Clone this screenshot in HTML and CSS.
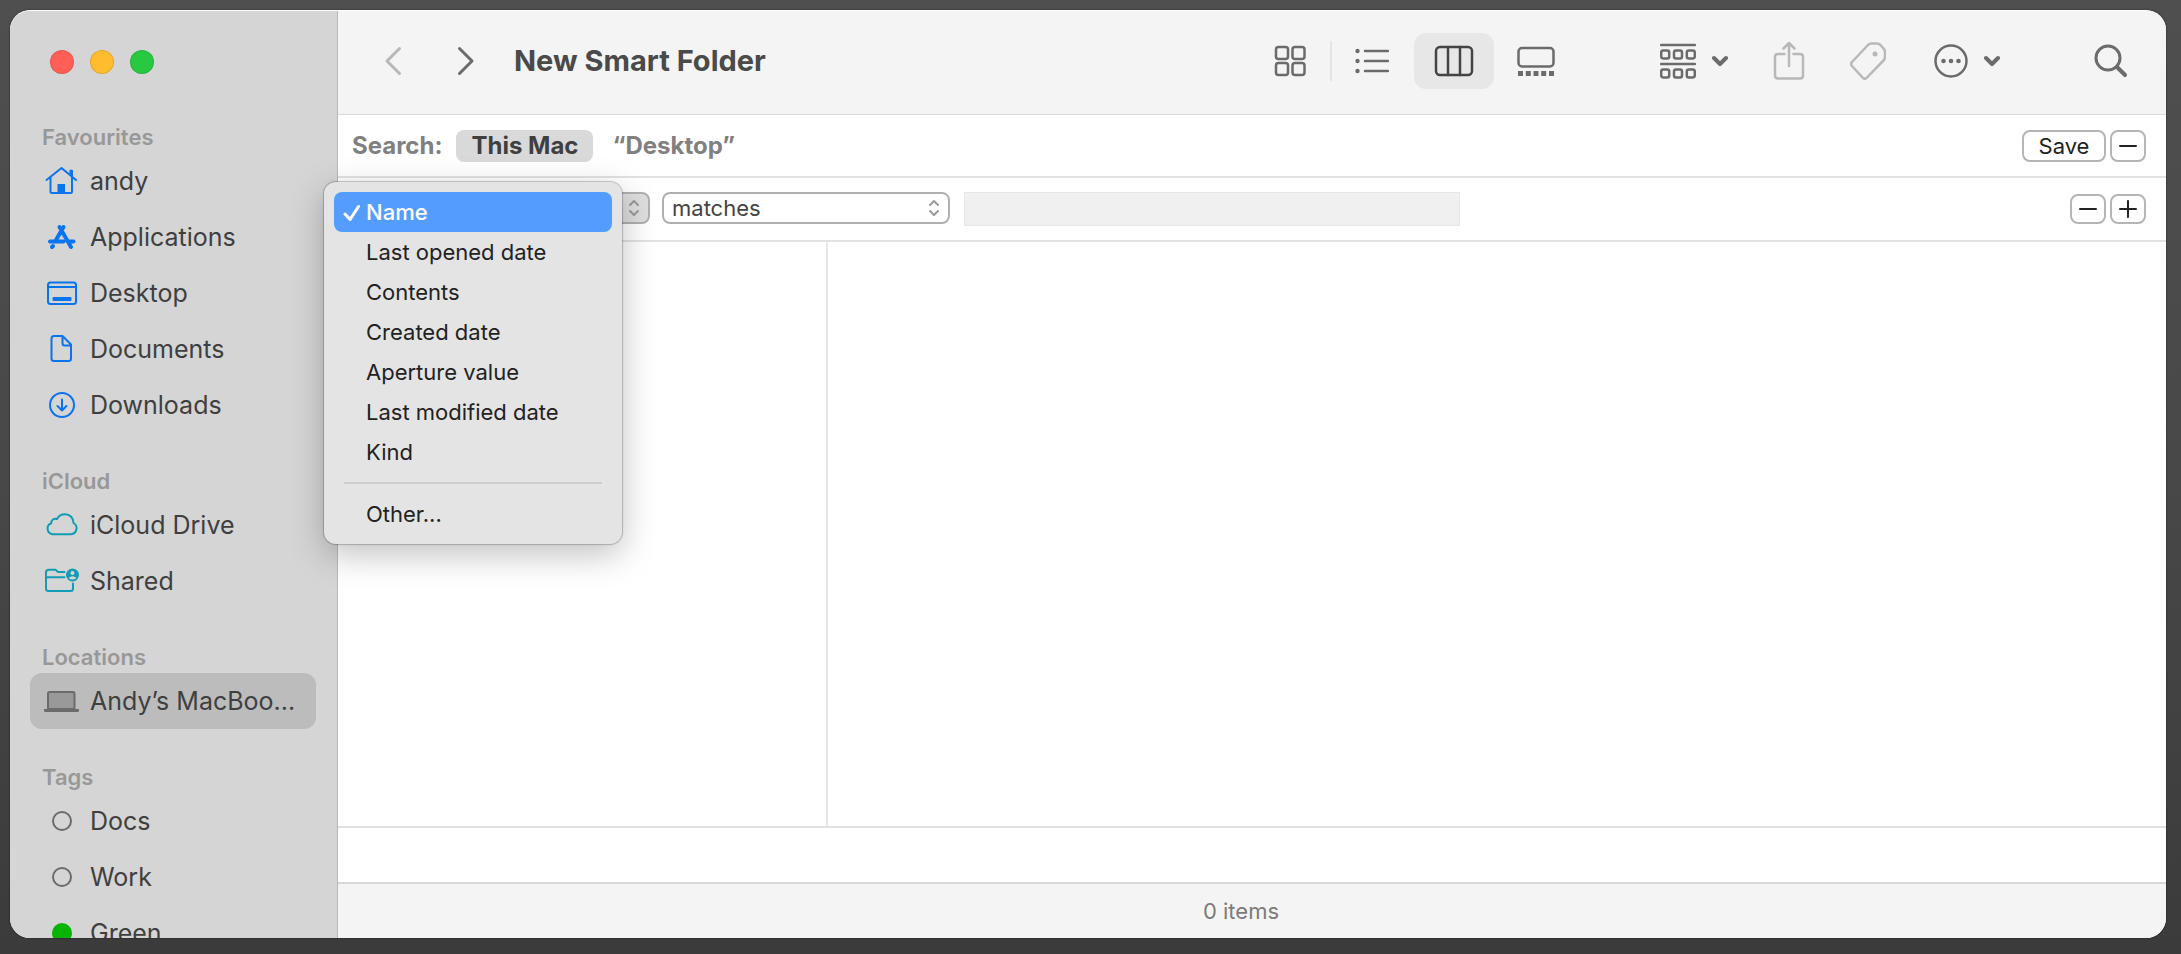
FILE: index.html
```html
<!DOCTYPE html>
<html lang="en-GB">
<head>
    <meta charset="UTF-8">
    <meta name="viewport" content="width=device-width, initial-scale=1.0">
    <title>New Smart Folder</title>
    <link rel="stylesheet" href="styles.css">
</head>
<body>
<div class="window">
    <nav class="sidebar">
        <div class="traffic-lights">
            <button type="button" class="light light-close" aria-label="Close"></button>
            <button type="button" class="light light-minimise" aria-label="Minimise"></button>
            <button type="button" class="light light-zoom" aria-label="Zoom"></button>
        </div>

        <h2 class="side-title">Favourites</h2>
        <a href="#" class="side-item">
            <svg class="side-icon blue" viewBox="0 0 36 36">
                <path d="M2.500 17 17.500 5 32 17M6.500 14.500V28.500Q6.500 30 8 30H26.500Q28 30 28 28.500V14.500M27 12.500V7.500" />
                <path class="solid" d="M13.500 21H21V30H13.500ZM25.500 7H29V13.500L25.500 11Z" />
            </svg>
            <span>andy</span>
        </a>
        <a href="#" class="side-item">
            <svg class="side-icon blue" viewBox="0 0 36 36">
                <path class="thick" d="M19.500 8 12 21M15.500 8 27 28M6 22.500H19.500M25.500 22.500H29.500M9 27 8 28" />
            </svg>
            <span>Applications</span>
        </a>
        <a href="#" class="side-item">
            <svg class="side-icon blue" viewBox="0 0 36 36">
                <rect x="4" y="7.500" width="28" height="21.500" rx="2.500" />
                <path d="M4 12H32" />
                <rect class="solid" x="8.500" y="22" width="19" height="4" rx="1" />
            </svg>
            <span>Desktop</span>
        </a>
        <a href="#" class="side-item">
            <svg class="side-icon blue" viewBox="0 0 36 36">
                <path d="M18.500 5H10Q7.500 5 7.500 7.500V27.500Q7.500 30 10 30H24.500Q27 30 27 27.500V13.500L18.500 5V12.500Q18.500 14.500 20.500 14.500H27" />
            </svg>
            <span>Documents</span>
        </a>
        <a href="#" class="side-item">
            <svg class="side-icon blue" viewBox="0 0 36 36">
                <circle cx="18" cy="18" r="12" />
                <path d="M18 12.500V23.500M13.500 19 18 23.500 22.500 19" />
            </svg>
            <span>Downloads</span>
        </a>

        <h2 class="side-title">iCloud</h2>
        <a href="#" class="side-item">
            <svg class="side-icon teal" viewBox="0 0 36 36">
                <path d="M8.500 27.200H27A6 6 0 0 0 29.500 16C29.500 11 26 7.200 21 7.200 17.500 7.200 14.500 9 13 12 10 10.800 7 13 7.300 16.200A5.700 5.700 0 0 0 8.500 27.200Z" />
            </svg>
            <span>iCloud Drive</span>
        </a>
        <a href="#" class="side-item">
            <svg class="side-icon teal" viewBox="0 0 36 36">
                <path d="M20.500 9H14L11.500 6.800H5Q2 6.800 2 9.500V25.500Q2 28 4.500 28H26.500Q29 28 29 25.500V20.500M2 14.200H20.500" />
                <circle class="solid" cx="28.500" cy="12" r="6.500" />
                <circle class="cutout" cx="28.500" cy="10" r="2" />
                <path class="cutout" d="M24.500 15Q28.500 11.500 32.500 15Q28.500 18 24.500 15Z" />
            </svg>
            <span>Shared</span>
        </a>

        <h2 class="side-title">Locations</h2>
        <a href="#" class="side-item selected">
            <svg class="side-icon grey" viewBox="0 0 36 36">
                <path fill="#999" d="M4 26V10.500Q4 9 5.500 9H29Q30.500 9 30.500 10.500V26Z" />
                <path class="solid" d="M0 26H35V27.500Q35 29 33.500 29H1.500Q0 29 0 27.500Z" />
            </svg>
            <span>Andy’s MacBoo...</span>
        </a>

        <h2 class="side-title">Tags</h2>
        <a href="#" class="side-item">
            <svg class="side-icon grey" viewBox="0 0 36 36"><circle cx="18" cy="18" r="9" /></svg>
            <span>Docs</span>
        </a>
        <a href="#" class="side-item">
            <svg class="side-icon grey" viewBox="0 0 36 36"><circle cx="18" cy="18" r="9" /></svg>
            <span>Work</span>
        </a>
        <a href="#" class="side-item">
            <svg class="side-icon green" viewBox="0 0 36 36"><circle class="solid" cx="18" cy="18" r="10" /></svg>
            <span>Green</span>
        </a>
    </nav>

    <main class="main">
        <header class="toolbar">
            <button type="button" class="nav-btn faded" aria-label="Back">
                <svg width="18" height="30" viewBox="0 0 18 30"><path d="M15.500 2.500 3 15 15.500 27.500" /></svg>
            </button>
            <button type="button" class="nav-btn" aria-label="Forward">
                <svg width="18" height="30" viewBox="0 0 18 30"><path d="M2.500 2.500 15 15 2.500 27.500" /></svg>
            </button>
            <h1 class="title">New Smart Folder</h1>

            <div class="views">
                <button type="button" class="view-btn" aria-label="Icons">
                    <svg width="32" height="32" viewBox="0 0 32 32">
                        <rect x="2" y="2" width="12" height="12" rx="2.500" />
                        <rect x="18.500" y="2" width="12" height="12" rx="2.500" />
                        <rect x="2" y="18" width="12" height="12" rx="2.500" />
                        <rect x="18.500" y="18" width="12" height="12" rx="2.500" />
                    </svg>
                </button>
                <span class="view-divider"></span>
                <button type="button" class="view-btn" aria-label="List">
                    <svg width="34" height="28" viewBox="0 0 34 28">
                        <path d="M10 4H33M10 14H33M10 24H33" />
                        <circle class="solid" cx="2.500" cy="4" r="2.200" />
                        <circle class="solid" cx="2.500" cy="14" r="2.200" />
                        <circle class="solid" cx="2.500" cy="24" r="2.200" />
                    </svg>
                </button>
                <button type="button" class="view-btn active" aria-label="Columns">
                    <svg width="40" height="32" viewBox="0 0 40 32">
                        <rect x="2" y="2" width="36" height="28" rx="4" />
                        <path d="M14 2V30M26 2V30" />
                    </svg>
                </button>
                <button type="button" class="view-btn" aria-label="Gallery">
                    <svg width="38" height="32" viewBox="0 0 38 32">
                        <rect x="1.500" y="3" width="35" height="18.500" rx="3.500" />
                        <path class="solid" d="M1 26H6V31H1ZM8.800 26H13.800V31H8.800ZM16.500 26H21.500V31H16.500ZM24.200 26H29.200V31H24.200ZM32 26H37V31H32Z" />
                    </svg>
                </button>
            </div>

            <button type="button" class="tool-btn" aria-label="Group">
                <svg width="36" height="36" viewBox="0 0 36 36">
                    <path d="M1 2H35M1 21H35" />
                    <rect x="1.200" y="7.500" width="8" height="8" rx="2" />
                    <rect x="14" y="7.500" width="8" height="8" rx="2" />
                    <rect x="26.800" y="7.500" width="8" height="8" rx="2" />
                    <rect x="1.200" y="26.500" width="8" height="8" rx="2" />
                    <rect x="14" y="26.500" width="8" height="8" rx="2" />
                    <rect x="26.800" y="26.500" width="8" height="8" rx="2" />
                </svg>
                <svg class="chevron" width="16" height="12" viewBox="0 0 16 12"><path d="M2 3 8 9 14 3" /></svg>
            </button>
            <button type="button" class="tool-btn faded" aria-label="Share">
                <svg width="34" height="40" viewBox="0 0 34 40">
                    <path d="M12.500 13H6Q3 13 3 16V34.500Q3 37.500 6 37.500H28Q31 37.500 31 34.500V16Q31 13 28 13H21.500M17 25V2M11.500 7.500 17 2 22.500 7.500" />
                </svg>
            </button>
            <button type="button" class="tool-btn faded" aria-label="Tags">
                <svg width="36" height="38" viewBox="1 0 36 38">
                    <path d="M2.500 23.500Q1.500 21.500 3 20L19 3Q20.500 1.500 22.500 1.500H28Q30 1.500 31.500 3L34.500 6.500Q36 8 36 10V15Q36 17 34.500 18.500L17.500 36Q16 37.500 14 36Z" />
                    <circle class="solid" cx="26" cy="12" r="2.500" />
                </svg>
            </button>
            <button type="button" class="tool-btn more-btn" aria-label="More">
                <svg width="34" height="34" viewBox="0 0 34 34">
                    <circle cx="17" cy="17" r="15.500" />
                    <circle class="solid" cx="9.500" cy="17" r="2.300" />
                    <circle class="solid" cx="17" cy="17" r="2.300" />
                    <circle class="solid" cx="24.500" cy="17" r="2.300" />
                </svg>
                <svg class="chevron" width="16" height="12" viewBox="0 0 16 12"><path d="M2 3 8 9 14 3" /></svg>
            </button>
            <button type="button" class="tool-btn search-btn" aria-label="Search">
                <svg width="34" height="34" viewBox="0 0 34 34">
                    <circle cx="14" cy="14" r="12" />
                    <path class="handle" d="M23 23 31 31" />
                </svg>
            </button>
        </header>

        <div class="scope-bar">
            <span class="scope-label">Search:</span>
            <button type="button" class="scope active">This Mac</button>
            <button type="button" class="scope">“Desktop”</button>
            <div class="bar-buttons">
                <button type="button" class="push-btn save-btn">Save</button>
                <button type="button" class="push-btn square-btn" aria-label="Hide criteria">
                    <svg width="18" height="18" viewBox="0 0 18 18"><path d="M1 9H17" /></svg>
                </button>
            </div>
        </div>

        <div class="rule-bar">
            <div class="select-wrap attribute">
                <select class="select open" aria-label="Attribute">
                    <option>Name</option>
                </select>
                <svg class="arrows" width="12" height="18" viewBox="0 0 12 18"><path d="M2 6 6 2 10 6M2 12 6 16 10 12" /></svg>
                <ul class="menu">
                    <li><button type="button" class="menu-item checked">
                        <svg class="tick" width="18" height="18" viewBox="0 0 18 18"><path d="M2 10 7 15.500 15.500 2.500" /></svg>Name</button></li>
                    <li><button type="button" class="menu-item">Last opened date</button></li>
                    <li><button type="button" class="menu-item">Contents</button></li>
                    <li><button type="button" class="menu-item">Created date</button></li>
                    <li><button type="button" class="menu-item">Aperture value</button></li>
                    <li><button type="button" class="menu-item">Last modified date</button></li>
                    <li><button type="button" class="menu-item">Kind</button></li>
                    <li class="menu-separator"></li>
                    <li><button type="button" class="menu-item">Other...</button></li>
                </ul>
            </div>
            <div class="select-wrap operator">
                <select class="select" aria-label="Operator">
                    <option>matches</option>
                </select>
                <svg class="arrows" width="12" height="18" viewBox="0 0 12 18"><path d="M2 6 6 2 10 6M2 12 6 16 10 12" /></svg>
            </div>
            <input type="text" class="value" aria-label="Value">
            <div class="bar-buttons">
                <button type="button" class="push-btn square-btn" aria-label="Remove rule">
                    <svg width="18" height="18" viewBox="0 0 18 18"><path d="M1 9H17" /></svg>
                </button>
                <button type="button" class="push-btn square-btn" aria-label="Add rule">
                    <svg width="18" height="18" viewBox="0 0 18 18"><path d="M1 9H17M9 1V17" /></svg>
                </button>
            </div>
        </div>

        <div class="columns">
            <div class="column"></div>
        </div>
        <div class="path-bar"></div>
        <footer class="status-bar">0 items</footer>
    </main>
</div>
</body>
</html>
```
FILE: styles.css
```css
* {
    box-sizing: border-box;
}

body {
    margin: 0;
    padding: 10px 15px 16px 10px;
    height: 100vh;
    background: linear-gradient(#4f4f4f, #484848 50%, #3b3b3b);
    font-family: Inter, "Liberation Sans", sans-serif;
    font-size: 22px;
    color: #222;
}

button, input, select {
    font: inherit;
    color: inherit;
}

button {
    padding: 0;
    border: none;
    background: none;
}

svg {
    display: block;
    flex: none;
    fill: none;
    stroke: currentColor;
    stroke-width: 2;
    stroke-linecap: round;
    stroke-linejoin: round;
}

svg .solid {
    fill: currentColor;
    stroke: none;
}

.window {
    display: flex;
    height: 100%;
    border-top: 1px solid #fff;
    border-radius: 20px;
    overflow: hidden;
    background-color: #fff;
    box-shadow: 0 0 2px rgba(0, 0, 0, 0.6);
}

/* Sidebar */
.sidebar {
    flex: none;
    width: 328px;
    padding: 39px 21px 0 20px;
    overflow: hidden;
    background-color: #d5d5d5;
    border-right: 1px solid #b8b8b8;
}

.traffic-lights {
    display: flex;
    gap: 16px;
    padding: 0 20px 15px;
}

.light {
    width: 24px;
    height: 24px;
    border: 1px solid rgba(0, 0, 0, 0.1);
    border-radius: 50%;
}

.light-close {
    background-color: #ff5f57;
}

.light-minimise {
    background-color: #febc2e;
}

.light-zoom {
    background-color: #28c840;
}

.side-title {
    margin: 0;
    padding: 36px 12px 4px;
    font-size: 22px;
    line-height: 24px;
    font-weight: 600;
    color: #989898;
}

.side-item {
    display: flex;
    align-items: center;
    gap: 10px;
    height: 56px;
    padding: 0 14px;
    border-radius: 12px;
    font-size: 25px;
    white-space: nowrap;
    text-decoration: none;
    color: #3f3f3f;
}

.side-item.selected {
    background-color: #bcbcbc;
}

.side-icon {
    width: 36px;
    height: 36px;
    overflow: visible;
}

.side-icon .thick {
    stroke-width: 4;
}

.side-icon .cutout {
    fill: #d5d5d5;
    stroke: none;
}

.blue {
    color: #0a73ee;
}

.teal {
    color: #109cb4;
}

.grey {
    color: #6b6b6b;
}

.green {
    color: #07b404;
}

/* Main pane */
.main {
    flex: 1;
    min-width: 0;
    display: flex;
    flex-direction: column;
}

.toolbar {
    display: flex;
    align-items: center;
    height: 104px;
    padding: 0 38px 3px 46px;
    background-color: #f4f4f4;
    border-bottom: 1px solid #d8d8d8;
    color: #6b6b6b;
}

.toolbar svg {
    stroke-width: 2.5;
}

.toolbar .faded {
    color: #b8b8b8;
}

.nav-btn {
    margin-right: 55px;
}

.toolbar .nav-btn svg {
    stroke-width: 3;
}

.nav-btn + .nav-btn {
    margin-right: 39px;
}

.title {
    margin: 0 auto 0 0;
    font-size: 29px;
    line-height: 36px;
    font-weight: 700;
    white-space: nowrap;
    color: #4a4a4a;
}

.views {
    display: flex;
    align-items: center;
    margin-right: 84px;
}

.view-btn {
    display: flex;
    align-items: center;
    justify-content: center;
    width: 80px;
    height: 56px;
    border-radius: 12px;
}

.view-btn + .view-btn {
    margin-left: 2px;
}

.view-btn.active {
    background-color: #e7e7e7;
    color: #444;
}

.view-divider {
    width: 2px;
    height: 40px;
    background-color: #e5e5e5;
}

.tool-btn {
    display: flex;
    align-items: center;
    gap: 16px;
    margin-right: 44px;
}

.toolbar .tool-btn .chevron {
    stroke-width: 4;
}

.more-btn {
    margin-left: 4px;
    margin-right: 94px;
}

.toolbar .search-btn svg {
    stroke-width: 3;
}

.search-btn {
    margin-right: 0;
}

.toolbar .handle {
    stroke-width: 4;
}

/* Search scope and rules */
.scope-bar, .rule-bar {
    display: flex;
    padding: 0 20px 0 14px;
    border-bottom: 2px solid #e2e2e2;
}

.scope-bar {
    align-items: center;
    height: 63px;
    font-size: 24px;
    font-weight: 700;
    color: #808080;
}

.scope-label {
    margin-right: 14px;
}

.scope {
    height: 32px;
    margin-right: 4px;
    padding: 0 15px;
    border-radius: 8px;
    line-height: 30px;
}

.scope.active {
    background-color: #d9d9d9;
    color: #3f3f3f;
}

.bar-buttons {
    display: flex;
    gap: 4px;
    margin-left: auto;
}

.push-btn {
    display: flex;
    align-items: center;
    justify-content: center;
    height: 32px;
    border: 2px solid #b5b5b5;
    border-radius: 8px;
    background-color: #fff;
    color: #222;
    font-size: 22px;
    font-weight: 400;
}

.save-btn {
    width: 84px;
}

.square-btn {
    width: 36px;
}

.rule-bar {
    align-items: flex-start;
    height: 64px;
    padding-top: 14px;
}

.rule-bar .bar-buttons {
    padding-top: 2px;
}

.rule-bar .push-btn {
    height: 30px;
}

.select-wrap {
    position: relative;
}

.attribute {
    width: 298px;
    margin-right: 12px;
}

.operator {
    width: 288px;
    margin-right: 14px;
}

.select {
    display: block;
    width: 100%;
    height: 32px;
    padding: 0 32px 0 8px;
    border: 2px solid #b0b0b0;
    border-radius: 8px;
    background-color: #fff;
    color: #444;
    appearance: none;
}

.select.open {
    background-color: #dedede;
}

.arrows {
    position: absolute;
    top: 7px;
    right: 10px;
    color: #999;
}

.value {
    width: 496px;
    height: 34px;
    padding: 0 8px;
    border: 1px solid #e6e6e6;
    background-color: #f0f0f0;
}

/* Attribute pop-up menu */
.menu {
    position: absolute;
    top: -10px;
    left: -28px;
    z-index: 1;
    width: 298px;
    margin: 0;
    padding: 10px;
    list-style: none;
    border-radius: 12px;
    background-color: #e4e4e4;
    box-shadow: 0 0 1px 1px rgba(0, 0, 0, 0.22), 0 10px 34px rgba(0, 0, 0, 0.25);
}

.menu-item {
    position: relative;
    display: block;
    width: 100%;
    height: 40px;
    padding: 0 32px;
    border-radius: 8px;
    text-align: left;
    white-space: nowrap;
}

.menu-item.checked {
    background-color: #549dff;
    color: #fff;
    font-weight: 500;
}

.tick {
    position: absolute;
    top: 12px;
    left: 9px;
    stroke-width: 3;
}

.menu-separator {
    height: 2px;
    margin: 10px;
    background-color: #cfcfcf;
}

/* Column view */
.columns {
    flex: 1;
    display: flex;
    border-bottom: 2px solid #e2e2e2;
}

.column {
    width: 490px;
    border-right: 2px solid #e6e6e6;
}

.path-bar {
    height: 56px;
    border-bottom: 2px solid #d8d8d8;
}

.status-bar {
    height: 54px;
    padding-right: 22px;
    line-height: 54px;
    text-align: center;
    background-color: #f4f4f4;
    color: #7b7b7b;
}
```
